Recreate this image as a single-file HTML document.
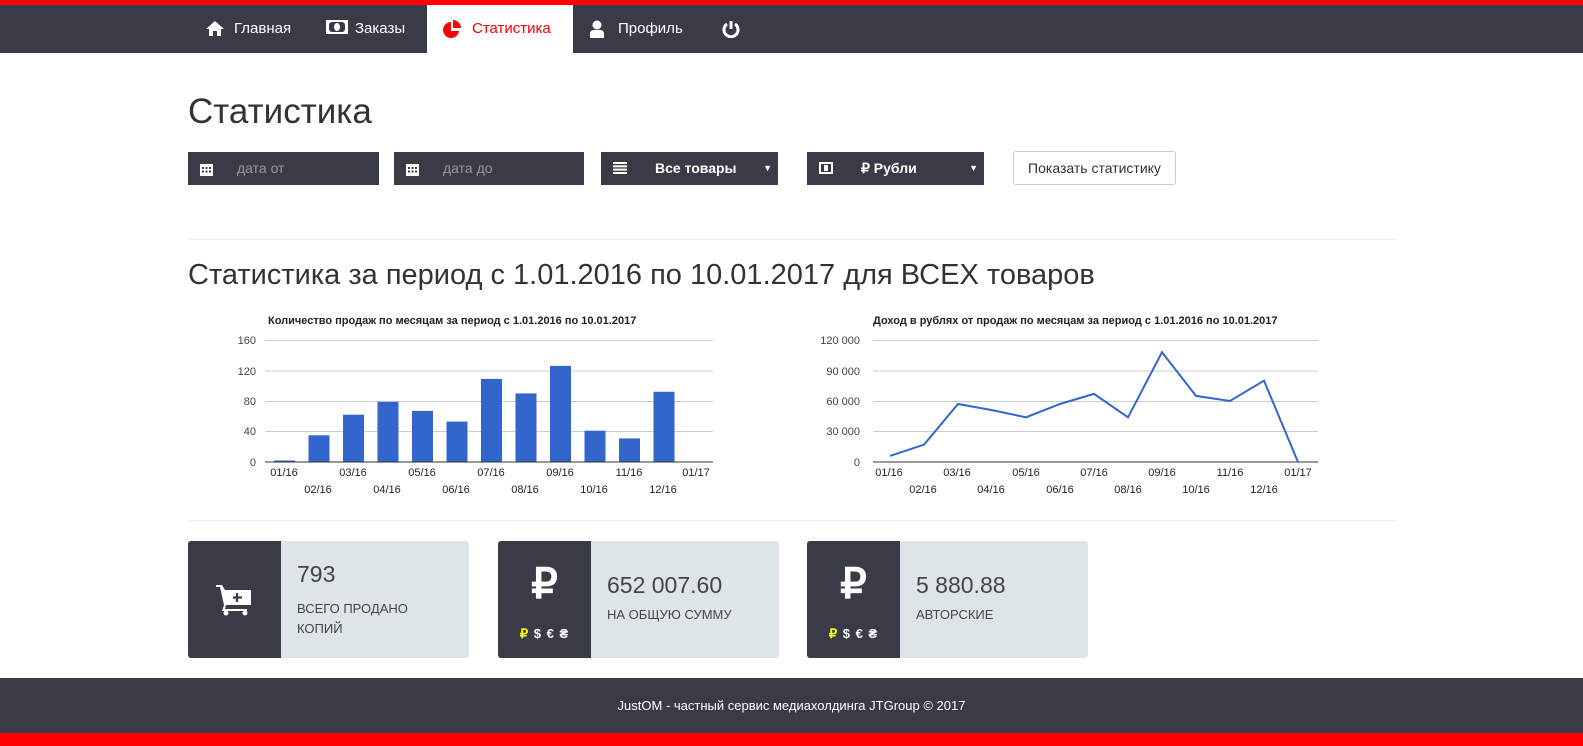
<!DOCTYPE html>
<html><head><meta charset="utf-8"><style>
*{margin:0;padding:0;box-sizing:border-box}
body{width:1583px;height:746px;position:relative;background:#fff;font-family:"Liberation Sans",sans-serif;overflow:hidden;color:#333}
.top{position:absolute;left:0;top:0;width:1583px;height:5px;background:#f00}
.nav{position:absolute;left:0;top:5px;width:1583px;height:48px;background:#393c47}
.nav a{position:absolute;top:0;height:48px;line-height:48px;color:#fff;font-size:15px;text-decoration:none}
.nav a svg{position:absolute;left:0;top:15px}
.act{background:#fff;color:#f00!important}
h1{position:absolute;left:188px;top:92px;font-size:35px;font-weight:normal;color:#333}
h2{position:absolute;left:188px;top:259px;font-size:29px;font-weight:normal;color:#333}
.f{position:absolute;top:152px;height:33px;background:#393c47;color:#fff;font-size:14px;line-height:33px}
.f svg{position:absolute;left:12px;top:10px}
.hr{position:absolute;left:188px;width:1209px;height:1px;background:#eee}
.card{position:absolute;top:541px;width:281px;height:117px;background:#dde5e8;border-radius:3px;overflow:hidden}
.card .ic{position:absolute;left:0;top:0;width:93px;height:117px;background:#393c47}
.card .n{position:absolute;left:109px;top:20px;font-size:23px;color:#444}
.card .t{position:absolute;left:109px;top:58px;font-size:13px;color:#444;line-height:20px}
.cur{position:absolute;left:0;width:93px;top:85px;text-align:center;color:#fff;font-size:13px;font-weight:bold;letter-spacing:1px}
.rub{position:absolute;left:0;width:93px;top:18px;text-align:center;color:#fff;font-size:42px;font-weight:bold}
.foot{position:absolute;left:0;top:678px;width:1583px;height:55px;background:#393c47;color:#fff;font-size:13px;text-align:center;line-height:55px}
.bot{position:absolute;left:0;top:733px;width:1583px;height:13px;background:#f00}
</style></head><body>
<div class="top"></div>
<div class="nav">
<a style="left:205px;padding-left:29px"><svg width="20" height="16" viewBox="0 0 20 16"><path d="M10 1L1 9h3v7h4v-5h4v5h4V9h3z" fill="#fff"/></svg>Главная</a>
<a style="left:326px;padding-left:29px"><svg width="22" height="14" viewBox="0 0 22 14"><rect x="0" y="0" width="22" height="14" fill="#fff"/><rect x="3" y="2" width="16" height="10" rx="3" fill="#393c47"/><ellipse cx="11" cy="7" rx="3" ry="4" fill="#fff"/></svg>Заказы</a>
<a class="act" style="left:427px;width:146px;padding-left:45px"><svg style="left:16px" width="19" height="19" viewBox="0 0 19 19"><path d="M8 2A8 8 0 1 0 16 11H8z" fill="#f00"/><path d="M10 0v8h8A8 8 0 0 0 10 0z" fill="#f00"/></svg>Статистика</a>
<a style="left:590px;padding-left:28px"><svg width="14" height="18" viewBox="0 0 14 18"><circle cx="7" cy="5" r="4.5" fill="#fff"/><path d="M0 18v-4q0-4 4-4h6q4 0 4 4v4z" fill="#fff"/></svg>Профиль</a>
<a style="left:722px;width:20px"><svg width="18" height="18" viewBox="0 0 18 18"><path d="M5 4A7 7 0 1 0 13 4" stroke="#fff" stroke-width="3" fill="none"/><path d="M9 1v8" stroke="#fff" stroke-width="3"/></svg></a>
</div>
<h1>Статистика</h1>
<div class="f" style="left:188px;width:191px;padding-left:49px;color:#999"><svg width="13" height="14" viewBox="0 0 13 14"><rect x="0" y="2" width="13" height="12" fill="#fff"/><g fill="#393c47"><rect x="2" y="5" width="2" height="2"/><rect x="5.5" y="5" width="2" height="2"/><rect x="9" y="5" width="2" height="2"/><rect x="2" y="8.5" width="2" height="2"/><rect x="5.5" y="8.5" width="2" height="2"/><rect x="9" y="8.5" width="2" height="2"/></g></svg>дата от</div>
<div class="f" style="left:394px;width:190px;padding-left:49px;color:#999"><svg width="13" height="14" viewBox="0 0 13 14"><rect x="0" y="2" width="13" height="12" fill="#fff"/><g fill="#393c47"><rect x="2" y="5" width="2" height="2"/><rect x="5.5" y="5" width="2" height="2"/><rect x="9" y="5" width="2" height="2"/><rect x="2" y="8.5" width="2" height="2"/><rect x="5.5" y="8.5" width="2" height="2"/><rect x="9" y="8.5" width="2" height="2"/></g></svg>дата до</div>
<div class="f" style="left:601px;width:177px;padding-left:54px;font-weight:bold"><svg width="14" height="12" viewBox="0 0 14 12"><g fill="#fff"><rect y="0" width="14" height="2"/><rect y="3.3" width="14" height="2"/><rect y="6.6" width="14" height="2"/><rect y="10" width="14" height="2"/></g></svg>Все товары<span style="position:absolute;right:6px;font-size:9px">▼</span></div>
<div class="f" style="left:807px;width:177px;padding-left:54px;font-weight:bold"><svg width="14" height="12" viewBox="0 0 14 12"><rect width="14" height="12" fill="#fff"/><rect x="2" y="2" width="10" height="8" fill="#393c47"/><rect x="5" y="3" width="4" height="6" fill="#fff"/></svg>₽ Рубли<span style="position:absolute;right:6px;font-size:9px">▼</span></div>
<div style="position:absolute;left:1013px;top:151px;width:163px;height:34px;border:1px solid #ccc;border-radius:3px;font-size:14px;line-height:32px;text-align:center;color:#333">Показать статистику</div>
<div class="hr" style="top:239px"></div>
<h2>Статистика за период с 1.01.2016 по 10.01.2017 для ВСЕХ товаров</h2>
<svg style="position:absolute;left:0;top:0" width="1583" height="520" font-family="Liberation Sans, sans-serif" font-size="11" fill="#222">
<text x="268" y="324" font-weight="bold">Количество продаж по месяцам за период с 1.01.2016 по 10.01.2017</text>
<g stroke="#ccc"><line x1="265" y1="340.5" x2="713" y2="340.5"/><line x1="265" y1="371" x2="713" y2="371"/><line x1="265" y1="401.5" x2="713" y2="401.5"/><line x1="265" y1="431.5" x2="713" y2="431.5"/></g>
<g text-anchor="end" fill="#444"><text x="256" y="344">160</text><text x="256" y="375">120</text><text x="256" y="405">80</text><text x="256" y="435">40</text><text x="256" y="466">0</text></g>
<g fill="#3366cc">
<rect x="274" y="460.5" width="21" height="1.5"/><rect x="308.5" y="435.3" width="21" height="26.7"/><rect x="343" y="414.7" width="21" height="47.3"/><rect x="377.5" y="401.8" width="21" height="60.2"/><rect x="412" y="410.9" width="21" height="51.1"/><rect x="446.5" y="421.6" width="21" height="40.4"/><rect x="481" y="378.9" width="21" height="83.1"/><rect x="515.5" y="393.4" width="21" height="68.6"/><rect x="550" y="365.9" width="21" height="96.1"/><rect x="584.5" y="430.7" width="21" height="31.3"/><rect x="619" y="438.4" width="21" height="23.6"/><rect x="653.5" y="391.8" width="21" height="70.2"/></g>
<line x1="265" y1="462" x2="713" y2="462" stroke="#333"/>
<g text-anchor="middle" fill="#222"><text x="284" y="476">01/16</text><text x="318" y="493">02/16</text><text x="353" y="476">03/16</text><text x="387" y="493">04/16</text><text x="422" y="476">05/16</text><text x="456" y="493">06/16</text><text x="491" y="476">07/16</text><text x="525" y="493">08/16</text><text x="560" y="476">09/16</text><text x="594" y="493">10/16</text><text x="629" y="476">11/16</text><text x="663" y="493">12/16</text><text x="696" y="476">01/17</text></g>
<text x="873" y="324" font-weight="bold">Доход в рублях от продаж по месяцам за период с 1.01.2016 по 10.01.2017</text>
<g stroke="#ccc"><line x1="873" y1="340.5" x2="1318" y2="340.5"/><line x1="873" y1="371" x2="1318" y2="371"/><line x1="873" y1="401.5" x2="1318" y2="401.5"/><line x1="873" y1="431.5" x2="1318" y2="431.5"/></g>
<g text-anchor="end" fill="#444"><text x="860" y="344">120 000</text><text x="860" y="375">90 000</text><text x="860" y="405">60 000</text><text x="860" y="435">30 000</text><text x="860" y="466">0</text></g>
<line x1="873" y1="462" x2="1318" y2="462" stroke="#333"/>
<polyline fill="none" stroke="#3366cc" stroke-width="2" points="890,455.9 924,444.7 958,404 992,410.1 1026,417.3 1060,404 1094,393.9 1128,417.3 1162,352.2 1196,395.9 1230,401 1264,380.7 1298,462"/>
<g text-anchor="middle" fill="#222"><text x="889" y="476">01/16</text><text x="923" y="493">02/16</text><text x="957" y="476">03/16</text><text x="991" y="493">04/16</text><text x="1026" y="476">05/16</text><text x="1060" y="493">06/16</text><text x="1094" y="476">07/16</text><text x="1128" y="493">08/16</text><text x="1162" y="476">09/16</text><text x="1196" y="493">10/16</text><text x="1230" y="476">11/16</text><text x="1264" y="493">12/16</text><text x="1298" y="476">01/17</text></g>
</svg>
<div class="hr" style="top:520px"></div>
<div class="card" style="left:188px"><div class="ic"><svg style="position:absolute;left:28px;top:43px" width="36" height="32" viewBox="0 0 36 32"><path d="M0 1h6l3 5h26v15H10l-1 4h22v2H6l2-6L4 3H0z" fill="#fff"/><rect x="12" y="8" width="20" height="11" fill="#fff"/><path d="M21 9v9M17 13.5h9" stroke="#393c47" stroke-width="2.2"/><circle cx="10" cy="29" r="2.5" fill="#fff"/><circle cx="29" cy="29" r="2.5" fill="#fff"/></svg></div><div class="n">793</div><div class="t">ВСЕГО ПРОДАНО<br>КОПИЙ</div></div>
<div class="card" style="left:498px"><div class="ic"><div class="rub">₽</div><div class="cur"><span style="color:#ff0">₽</span> $ € ₴</div></div><div class="n" style="top:31px">652 007.60</div><div class="t" style="top:64px">НА ОБЩУЮ СУММУ</div></div>
<div class="card" style="left:807px"><div class="ic"><div class="rub">₽</div><div class="cur"><span style="color:#ff0">₽</span> $ € ₴</div></div><div class="n" style="top:31px">5 880.88</div><div class="t" style="top:64px">АВТОРСКИЕ</div></div>
<div class="foot">JustOM - частный сервис медиахолдинга JTGroup © 2017</div>
<div class="bot"></div>
</body></html>
